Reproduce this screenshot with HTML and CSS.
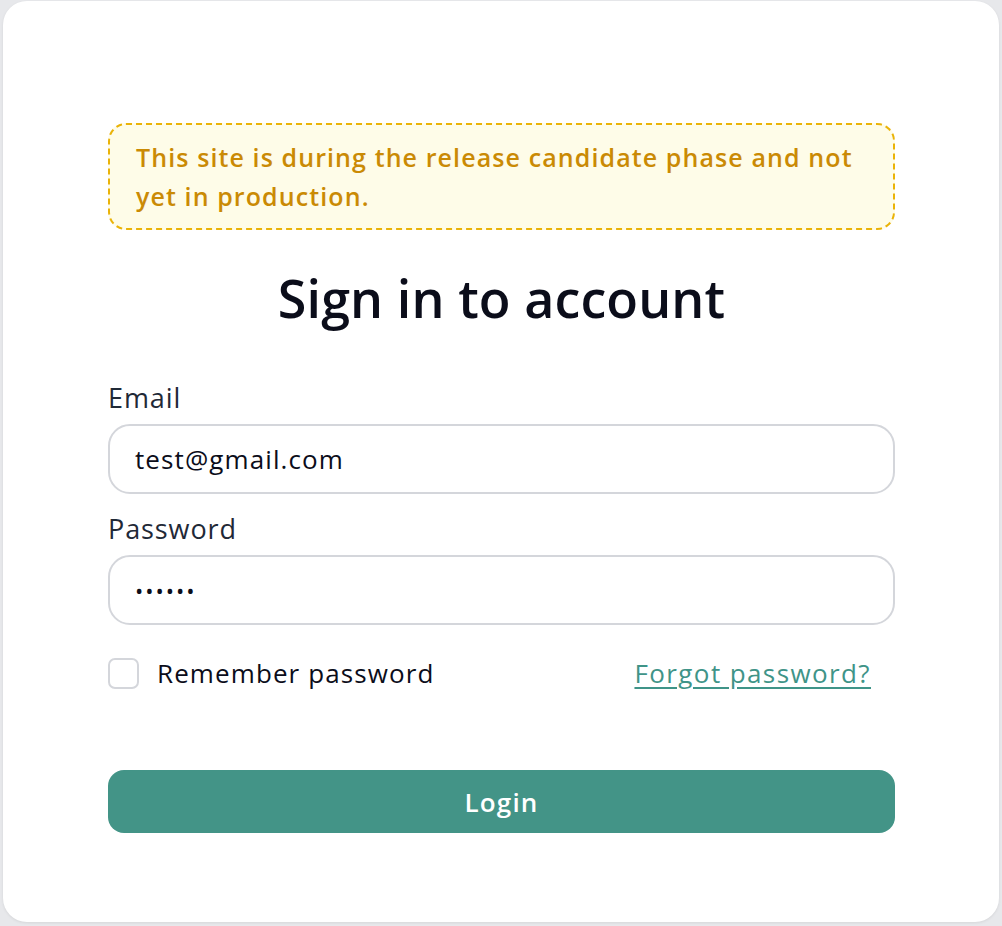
FILE: index.html
```html
<!DOCTYPE html>
<html lang="en">
<head>
<meta charset="utf-8">
<title>Sign in</title>
<link rel="stylesheet" href="styles.css">
</head>
<body>
<main class="card">
  <div class="content">
    <div class="notice">This site is during the release candidate phase and not yet in production.</div>
    <h1 class="title">Sign in to account</h1>
    <form class="form">
      <label class="label" for="email">Email</label>
      <input class="input" id="email" type="email" value="test@gmail.com">
      <label class="label label-pw" for="pw">Password</label>
      <input class="input input-pw" id="pw" type="password" value="123456">
      <div class="row">
        <label class="remember"><span class="box"></span>Remember password</label>
        <a class="forgot" href="#">Forgot password?</a>
      </div>
      <button class="btn" type="button">Login</button>
    </form>
  </div>
</main>
</body>
</html>
```
FILE: styles.css
```css
* { box-sizing: border-box; }
html, body { margin: 0; padding: 0; }
body {
  background: #e7e8eb;
  font-family: "Open Sans", "Noto Sans", sans-serif;
  height: 926px;
  padding: 1px 3px 4px 3px;
}
.card {
  background: #fff;
  border-radius: 24px;
  height: 921px;
  box-shadow: 0 1px 3px rgba(0,0,0,0.08);
  display: flex;
  justify-content: center;
  padding-top: 122px;
}
.content { width: 787px; margin-left: 1px; }
.notice {
  background: #fefce8;
  border: 2px dashed #eab308;
  border-radius: 18px;
  color: #ca8a04;
  font-size: 25px;
  font-weight: 600;
  letter-spacing: 1.1px;
  line-height: 39px;
  padding: 13px 24px 12px 26px;
}
.title {
  margin: 32px 0 0;
  text-align: center;
  font-size: 52px;
  font-weight: 650;
  letter-spacing: 0.1px;
  color: #0b0d1a;
  line-height: 72px;
}
.form { display: flex; flex-direction: column; margin-top: 48px; }
.label { font-size: 27px; font-weight: 500; letter-spacing: 0.9px; color: #1f2937; line-height: 32px; }
.label-pw { margin-top: 19px; }
.input {
  margin-top: 10px;
  height: 70px;
  border: 2px solid #d4d6db;
  border-radius: 22px;
  padding: 0 25px;
  font-family: inherit;
  font-size: 26px;
  font-weight: 500;
  letter-spacing: 1.1px;
  color: #0b0d1a;
  background: #fff;
  outline: none;
}
.input-pw { font-size: 22px; letter-spacing: 2px; }
.row {
  display: flex;
  align-items: center;
  justify-content: space-between;
  margin-top: 30px;
  padding-right: 24px;
}
.remember {
  display: flex;
  align-items: center;
  font-size: 26px;
  font-weight: 500;
  letter-spacing: 1.1px;
  color: #0b0d1a;
}
.box {
  width: 31px; height: 31px;
  border: 2px solid #d4d6db;
  border-radius: 7px;
  margin-right: 18px;
}
.forgot {
  font-size: 26px;
  font-weight: 500;
  letter-spacing: 1.4px;
  color: #3f9488;
  text-decoration: underline;
  text-underline-offset: 4px;
}
.btn {
  margin-top: 79px;
  height: 63px;
  border: none;
  border-radius: 16px;
  background: #439487;
  color: #fff;
  font-family: inherit;
  font-size: 26px;
  font-weight: 600;
  letter-spacing: 1.2px;
}
```
